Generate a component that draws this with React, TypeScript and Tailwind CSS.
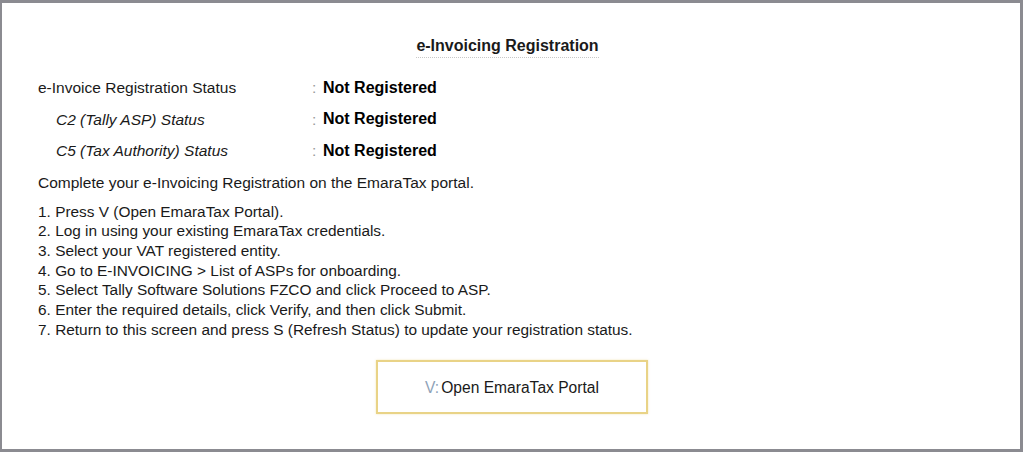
import React from "react";

const steps = [
  "Press V (Open EmaraTax Portal).",
  "Log in using your existing EmaraTax credentials.",
  "Select your VAT registered entity.",
  "Go to E-INVOICING > List of ASPs for onboarding.",
  "Select Tally Software Solutions FZCO and click Proceed to ASP.",
  "Enter the required details, click Verify, and then click Submit.",
  "Return to this screen and press S (Refresh Status) to update your registration status.",
];

const statusRows = [
  { label: "e-Invoice Registration Status", sub: false },
  { label: "C2 (Tally ASP) Status", sub: true },
  { label: "C5 (Tax Authority) Status", sub: true },
];

export default function App() {
  return (
    <div className="w-[1023px] h-[452px] bg-white border-t-[3px] border-r-[3px] border-b-[3px] border-l-2 border-[#8b8b91] font-['Liberation_Sans',Arial,sans-serif] text-[#1a1a1a]">
      <div className="flex flex-col pt-[33px] pl-[36px]">
        {/* title */}
        <div className="flex justify-center pr-[43px]">
          <h1 className="text-[16px] font-bold leading-[19px] pb-[2px] border-b border-dotted border-[#c8c8c8]">
            e-Invoicing Registration
          </h1>
        </div>

        {/* registration status rows */}
        <div className="mt-[14px] flex flex-col">
          {statusRows.map((row) => (
            <div key={row.label} className="flex items-center h-[31.5px] text-[15.5px]">
              <span
                className={
                  row.sub
                    ? "w-[274px] pl-[18px] italic"
                    : "w-[274px]"
                }
              >
                {row.label}
              </span>
              <span className="w-[11px] text-[#9a9a9a]">:</span>
              <span className="font-bold text-[16px] text-black">Not Registered</span>
            </div>
          ))}
        </div>

        <p className="mt-[6px] text-[15.5px] leading-[20px]">
          Complete your e-Invoicing Registration on the EmaraTax portal.
        </p>

        <ol className="mt-[9px] text-[15.4px] leading-[19.67px]">
          {steps.map((s, i) => (
            <li key={i}>
              {i + 1}. {s}
            </li>
          ))}
        </ol>

        {/* portal button */}
        <div className="mt-[21px] flex pl-[338px]">
          <button className="w-[272px] h-[54px] border-2 border-[#e9d387] bg-white text-[15.6px] flex items-center justify-center shadow-[0_0_2px_rgba(233,211,135,0.6)]">
            <span className="text-[#8fa3b8]">V:</span>
            <span className="ml-[2px]">Open EmaraTax Portal</span>
          </button>
        </div>
      </div>
    </div>
  );
}
